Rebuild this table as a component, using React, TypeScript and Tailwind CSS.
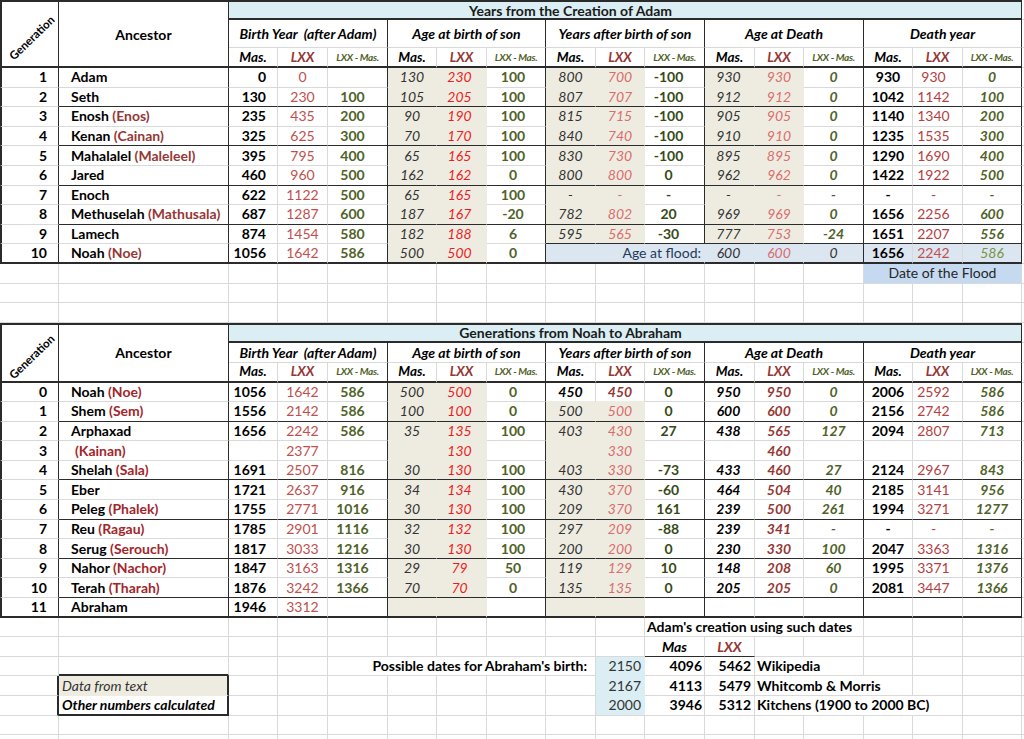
import React from "react";

const GC =
  "grid grid-cols-[59px_170px_49px_50px_60px_49px_50px_59px_50px_49px_60px_50px_49px_60px_49px_50px_59px_1fr]";

type B = "g" | "d" | "D" | "s" | "n" | "u" | "c";
const RB: Record<B, string> = {
  g: "border-r border-r-[#d9d9d9]",
  d: "border-r border-r-[#2b2b2b]",
  D: "border-r-2 border-r-[#2b2b2b]",
  s: "border-r border-r-[#eeece1]",
  n: "",
  u: "border-r border-r-[#dce6f1]",
  c: "border-r border-r-[#daeef3]",
};
const BB: Record<B, string> = {
  g: "border-b border-b-[#d9d9d9]",
  d: "border-b border-b-[#2b2b2b]",
  D: "border-b-2 border-b-[#2b2b2b]",
  s: "border-b border-b-[#eeece1]",
  n: "",
  u: "border-b border-b-[#dce6f1]",
  c: "border-b border-b-[#daeef3]",
};

type CellP = { v?: React.ReactNode; c?: string; r?: B; b?: B; span?: string };

function Cell({ v, c = "", r = "g", b = "g", span = "" }: CellP) {
  return (
    <div
      className={`flex items-center whitespace-pre leading-none overflow-visible ${span} ${RB[r]} ${BB[b]} ${c}`}
    >
      {v}
    </div>
  );
}

function Row({ cells, h = "h-[19.6px]" }: { cells: CellP[]; h?: string }) {
  return (
    <div className={`${GC} ${h}`}>
      {cells.map((p, i) => (
        <Cell key={i} {...p} />
      ))}
    </div>
  );
}

const blanks = (n: number): CellP[] => Array.from({ length: n }, () => ({}));
const filler: CellP = { r: "n" };

const SUBS = [
  "Birth Year  (after Adam)",
  "Age at birth of son",
  "Years after birth of son",
  "Age at Death",
  "Death year",
];

function Header({ title, tall }: { title: string; tall?: boolean }) {
  return (
    <div
      className={`${GC} ${tall ? "grid-rows-[20px_28px_20px]" : "grid-rows-[20px_20px_20px]"}`}
    >
      <div className="row-span-3 flex items-center justify-center border-l-2 border-l-[#2b2b2b] border-t-2 border-t-[#2b2b2b] border-r border-r-[#2b2b2b] border-b-2 border-b-[#2b2b2b]">
        <span className="-rotate-[44deg] translate-x-[2px] translate-y-[4px] font-bold text-[11.5px] leading-none whitespace-nowrap">
          Generation
        </span>
      </div>
      <div className="row-span-3 flex items-center justify-center font-bold text-[14px] border-t-2 border-t-[#2b2b2b] border-r border-r-[#2b2b2b] border-b-2 border-b-[#2b2b2b]">
        Ancestor
      </div>
      <div className="col-span-15 flex items-center justify-center pr-[109px] bg-[#daeef3] font-bold text-[14px] text-[#1a1a1a] border-t-2 border-t-[#2b2b2b] border-r border-r-[#2b2b2b] border-b-2 border-b-[#2b2b2b]">
        {title}
      </div>
      <div className="border-b border-b-[#d9d9d9]" />
      {SUBS.map((s) => (
        <div
          key={s}
          className="col-span-3 flex items-center justify-center whitespace-pre font-bold italic text-[14px] border-r border-r-[#2b2b2b] border-b border-b-[#d9d9d9]"
        >
          {s}
        </div>
      ))}
      <div className="border-b border-b-[#d9d9d9]" />
      {SUBS.map((s) => (
        <React.Fragment key={s}>
          <div className="flex items-center justify-center font-bold italic text-[13.5px] border-r border-r-[#d9d9d9] border-b-2 border-b-[#2b2b2b]">
            Mas.
          </div>
          <div className="flex items-center justify-center font-bold italic text-[13.5px] text-[#953735] border-r border-r-[#d9d9d9] border-b-2 border-b-[#2b2b2b]">
            LXX
          </div>
          <div className="flex items-center justify-center whitespace-nowrap font-bold italic text-[10px] tracking-[-0.3px] text-[#4f6228] border-r border-r-[#2b2b2b] border-b-2 border-b-[#2b2b2b]">
            LXX - Mas.
          </div>
        </React.Fragment>
      ))}
      <div className="border-b border-b-[#d9d9d9]" />
    </div>
  );
}

const TOP_STYLE: string[] = [
  "font-bold justify-end pr-[11px] border-l-2 border-l-[#2b2b2b]",
  "font-bold pl-[12px]",
  "font-bold justify-end pr-[11px] text-black",
  "justify-center text-[#c0504d]",
  "font-bold justify-center pr-[10px] text-[#4f6228]",
  "italic justify-center text-[#333333]",
  "italic justify-center pr-[4px] text-[#ed1c24]",
  "font-bold justify-center pr-[6px] text-[#4f6228]",
  "italic justify-center text-[#333333]",
  "italic justify-center text-[#da6d6d]",
  "font-bold justify-center pr-[12px] text-[#374a17]",
  "italic justify-center pr-[2px] text-[#333333]",
  "italic justify-center text-[#da6d6d]",
  "font-bold italic justify-center text-[#4f6228]",
  "font-bold justify-center text-black",
  "justify-center pr-[8px] text-[#b5403f]",
  "font-bold italic justify-center text-[#4f6228]",
];

const LOW_STYLE: string[] = TOP_STYLE.map((s, i) => {
  if (i === 11) return "font-bold italic justify-center pr-[2px] text-black";
  if (i === 12) return "font-bold italic justify-center text-[#953735]";
  return s;
});

const TOP: string[][] = [
  ["1", "Adam", "", "0", "0", "", "130", "230", "100", "800", "700", "-100", "930", "930", "0", "930", "930", "0"],
  ["2", "Seth", "", "130", "230", "100", "105", "205", "100", "807", "707", "-100", "912", "912", "0", "1042", "1142", "100"],
  ["3", "Enosh", "(Enos)", "235", "435", "200", "90", "190", "100", "815", "715", "-100", "905", "905", "0", "1140", "1340", "200"],
  ["4", "Kenan", "(Cainan)", "325", "625", "300", "70", "170", "100", "840", "740", "-100", "910", "910", "0", "1235", "1535", "300"],
  ["5", "Mahalalel", "(Maleleel)", "395", "795", "400", "65", "165", "100", "830", "730", "-100", "895", "895", "0", "1290", "1690", "400"],
  ["6", "Jared", "", "460", "960", "500", "162", "162", "0", "800", "800", "0", "962", "962", "0", "1422", "1922", "500"],
  ["7", "Enoch", "", "622", "1122", "500", "65", "165", "100", "-", "-", "-", "-", "-", "-", "-", "-", "-"],
  ["8", "Methuselah", "(Mathusala)", "687", "1287", "600", "187", "167", "-20", "782", "802", "20", "969", "969", "0", "1656", "2256", "600"],
  ["9", "Lamech", "", "874", "1454", "580", "182", "188", "6", "595", "565", "-30", "777", "753", "-24", "1651", "2207", "556"],
  ["10", "Noah", "(Noe)", "1056", "1642", "586", "500", "500", "0", "", "", "", "", "", "", "", "", ""],
];

const LOW: string[][] = [
  ["0", "Noah", "(Noe)", "1056", "1642", "586", "500", "500", "0", "450", "450", "0", "950", "950", "0", "2006", "2592", "586"],
  ["1", "Shem", "(Sem)", "1556", "2142", "586", "100", "100", "0", "500", "500", "0", "600", "600", "0", "2156", "2742", "586"],
  ["2", "Arphaxad", "", "1656", "2242", "586", "35", "135", "100", "403", "430", "27", "438", "565", "127", "2094", "2807", "713"],
  ["3", "", "(Kainan)", "", "2377", "", "", "130", "", "", "330", "", "", "460", "", "", "", ""],
  ["4", "Shelah", "(Sala)", "1691", "2507", "816", "30", "130", "100", "403", "330", "-73", "433", "460", "27", "2124", "2967", "843"],
  ["5", "Eber", "", "1721", "2637", "916", "34", "134", "100", "430", "370", "-60", "464", "504", "40", "2185", "3141", "956"],
  ["6", "Peleg", "(Phalek)", "1755", "2771", "1016", "30", "130", "100", "209", "370", "161", "239", "500", "261", "1994", "3271", "1277"],
  ["7", "Reu", "(Ragau)", "1785", "2901", "1116", "32", "132", "100", "297", "209", "-88", "239", "341", "-", "-", "-", "-"],
  ["8", "Serug", "(Serouch)", "1817", "3033", "1216", "30", "130", "100", "200", "200", "0", "230", "330", "100", "2047", "3363", "1316"],
  ["9", "Nahor", "(Nachor)", "1847", "3163", "1316", "29", "79", "50", "119", "129", "10", "148", "208", "60", "1995", "3371", "1376"],
  ["10", "Terah", "(Tharah)", "1876", "3242", "1366", "70", "70", "0", "135", "135", "0", "205", "205", "0", "2081", "3447", "1366"],
  ["11", "Abraham", "", "1946", "3312", "", "", "", "", "", "", "", "", "", "", "", "", ""],
];

const BOUND = [0, 1, 4, 7, 10, 13, 16];

function shaded(kind: "top" | "low", col: number, i: number) {
  if (col === 5 || col === 6) return kind === "top" ? i <= 9 : i <= 11;
  if (col === 8 || col === 9) return kind === "top" ? i <= 8 : i >= 1 && i <= 11;
  if (col === 11 || col === 12) return kind === "top" ? i <= 8 : false;
  return false;
}

function dataCells(row: string[], idx: number, kind: "top" | "low"): CellP[] {
  const last = kind === "top" ? 9 : 11;
  const seps = kind === "top" ? [1, 3, 5, 7] : [1, 4, 6, 8, 10];
  const styles = kind === "top" ? TOP_STYLE : LOW_STYLE;
  const altColor = kind === "top" ? "text-[#953735]" : "text-[#a3262a]";
  const cells: CellP[] = [];
  for (let col = 0; col < 17; col++) {
    const sh = shaded(kind, col, idx);
    const r: B = BOUND.includes(col) ? "d" : sh ? "s" : "g";
    let b: B;
    if (idx === last) b = "D";
    else if (seps.includes(idx) && col >= 1) b = "d";
    else if (kind === "top" && idx === 8 && col >= 8) b = "d";
    else if (sh || shaded(kind, col, idx + 1)) b = "s";
    else b = "g";
    let c = styles[col];
    if (kind === "low" && idx === 0 && col === 8) c = "font-bold italic justify-center text-black";
    if (kind === "low" && idx === 0 && col === 9) c = "font-bold italic justify-center text-[#953735]";
    if (sh) c += " bg-[#eeece1]";
    let v: React.ReactNode;
    if (col === 0) v = row[0];
    else if (col === 1) {
      const name = row[1];
      const alt = row[2];
      v = (
        <span className={name ? "" : "pl-[4px]"}>
          {name}
          {name && alt ? " " : ""}
          {alt && <span className={altColor}>{alt}</span>}
        </span>
      );
    } else v = row[col + 1];
    cells.push({ v, c, r, b });
  }
  cells.push(filler);
  return cells;
}

function noahTopCells(): CellP[] {
  const base = dataCells(TOP[9], 9, "top").slice(0, 8);
  const band = "bg-[#dce6f1]";
  return [
    ...base,
    { span: "col-span-3", v: "Age at flood:", c: `${band} justify-end pr-[3px] text-[#1f3b5a]`, r: "u", b: "D" },
    { v: "600", c: `${band} italic justify-center pr-[2px] text-[#333333]`, r: "u", b: "D" },
    { v: "600", c: `${band} italic justify-center text-[#da6d6d]`, r: "u", b: "D" },
    { v: "0", c: `${band} italic justify-center text-[#333333]`, r: "d", b: "D" },
    { v: "1656", c: `${band} font-bold justify-center text-black`, r: "g", b: "D" },
    { v: "2242", c: `${band} justify-center pr-[8px] text-[#c0504d]`, r: "g", b: "D" },
    { v: "586", c: `${band} italic justify-center text-[#77933c]`, r: "d", b: "D" },
    filler,
  ];
}

function EmptyRow() {
  return <Row cells={[...blanks(17), filler]} />;
}

export default function App() {
  return (
    <div className="w-[1024px] h-[739px] overflow-hidden bg-white text-black text-[14px] font-[Lato,sans-serif]">
      <Header title="Years from the Creation of Adam" tall />
      {TOP.slice(0, 9).map((r, i) => (
        <Row key={i} cells={dataCells(r, i, "top")} />
      ))}
      <Row cells={noahTopCells()} />

      <Row
        cells={[
          ...blanks(14),
          { span: "col-span-3", v: "Date of the Flood", c: "bg-[#c5d9f1] justify-center text-[#262626]", r: "g", b: "g" },
          filler,
        ]}
      />
      <EmptyRow />
      <Row cells={[...blanks(17), filler]} h="h-[19.4px]" />

      <Header title="Generations from Noah to Abraham" />
      {LOW.map((r, i) => (
        <Row key={i} cells={dataCells(r, i, "low")} />
      ))}

      <Row
        cells={[
          ...blanks(10),
          { span: "col-span-4", v: "Adam's creation using such dates", c: "font-bold pl-[2px]" },
          ...blanks(3),
          filler,
        ]}
      />
      <Row
        cells={[
          ...blanks(10),
          { v: "Mas", c: "font-bold italic justify-center", b: "d" },
          { v: "LXX", c: "font-bold italic justify-center text-[#953735]", b: "d" },
          ...blanks(5),
          filler,
        ]}
      />
      <Row
        cells={[
          {},
          { b: "D" },
          {},
          {},
          { span: "col-span-5", v: "Possible dates for Abraham's birth:", c: "font-bold justify-end pr-[8px]" },
          { v: "2150", c: "bg-[#daeef3] justify-end pr-[3px] text-[#333333]", r: "c", b: "c" },
          { v: "4096", c: "font-bold justify-end pr-[2px]" },
          { v: "5462", c: "font-bold justify-end pr-[3px]" },
          { span: "col-span-2", v: "Wikipedia", c: "font-bold pl-[2px]" },
          {},
          {},
          {},
          filler,
        ]}
      />
      <Row
        cells={[
          { r: "D" },
          { v: "Data from text", c: "italic bg-[#eeece1] pl-[3px] text-[#333333]", r: "D", b: "s" },
          ...blanks(7),
          { v: "2167", c: "bg-[#daeef3] justify-end pr-[3px] text-[#333333]", r: "c", b: "c" },
          { v: "4113", c: "font-bold justify-end pr-[2px]" },
          { v: "5479", c: "font-bold justify-end pr-[3px]" },
          { span: "col-span-3", v: "Whitcomb & Morris", c: "font-bold pl-[2px]" },
          {},
          {},
          filler,
        ]}
      />
      <Row
        cells={[
          { r: "D" },
          { v: "Other numbers calculated", c: "font-bold italic pl-[3px]", r: "D", b: "D" },
          ...blanks(7),
          { v: "2000", c: "bg-[#daeef3] justify-end pr-[3px] text-[#333333]", r: "c" },
          { v: "3946", c: "font-bold justify-end pr-[2px]" },
          { v: "5312", c: "font-bold justify-end pr-[3px]" },
          { span: "col-span-4", v: "Kitchens (1900 to 2000 BC)", c: "font-bold pl-[2px]" },
          {},
          filler,
        ]}
      />
      <EmptyRow />
      <EmptyRow />
    </div>
  );
}
